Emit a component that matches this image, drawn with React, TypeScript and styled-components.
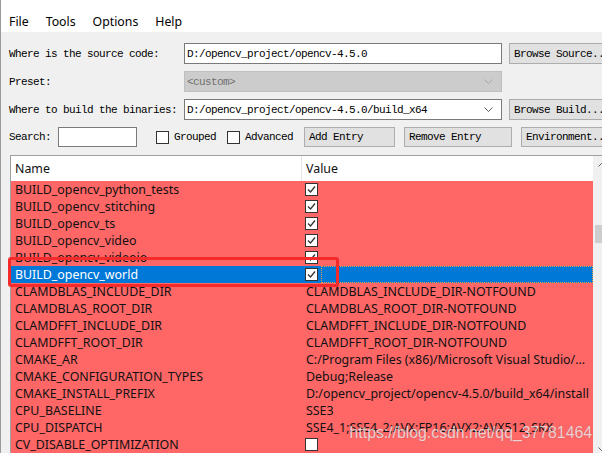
import styled, { createGlobalStyle } from "styled-components";

const mono = `"Liberation Mono", "Courier New", monospace`;
const sans = `"Noto Sans", "Open Sans", sans-serif`;

const GlobalStyle = createGlobalStyle`
  * { box-sizing: border-box; }
  html, body { margin: 0; padding: 0; background: #f0f0f0; }
  body { width: 602px; height: 453px; overflow: hidden; }
`;

const Window = styled.div`
  position: relative;
  width: 602px;
  height: 453px;
  overflow: hidden;
  background: #f0f0f0;
  border-left: 1px solid #9a9a9a;
  display: flex;
  flex-direction: column;
`;

const MenuBar = styled.div`
  height: 32px;
  flex: none;
  background: #fff;
  display: flex;
  align-items: flex-start;
  gap: 17px;
  padding: 12px 0 0 8px;
  font-family: ${sans};
  font-size: 12.3px;
  line-height: 20px;
  color: #000;
`;

const MenuItem = styled.span`
  white-space: nowrap;
`;

const Form = styled.div`
  display: grid;
  grid-template-columns: 168px 318px 100px;
  grid-auto-rows: 21px;
  gap: 7px;
  padding: 11px 0 0 8px;
  font-family: ${mono};
  font-size: 11px;
  letter-spacing: -0.6px;
  color: #000;
`;

const Label = styled.div`
  display: flex;
  align-items: center;
  white-space: nowrap;
`;

const Field = styled.div<{ $disabled?: boolean }>`
  display: flex;
  align-items: center;
  justify-content: space-between;
  padding: 0 8px 0 2px;
  border: 1px solid ${(p) => (p.$disabled ? "#bfbfbf" : "#7a7a7a")};
  background: ${(p) => (p.$disabled ? "#cccccc" : "#ffffff")};
  color: ${(p) => (p.$disabled ? "#707070" : "#000")};
  white-space: nowrap;
  overflow: hidden;
`;

const Chevron = styled.svg<{ $light?: boolean }>`
  width: 9px;
  height: 5px;
  flex: none;
  stroke: ${(p) => (p.$light ? "#a8a8a8" : "#606060")};
  fill: none;
`;

const Button = styled.div<{ $w?: number }>`
  display: flex;
  align-items: center;
  width: ${(p) => (p.$w ? `${p.$w}px` : "100%")};
  flex: none;
  padding: 0 4px;
  border: 1px solid #adadad;
  background: #e1e1e1;
  white-space: nowrap;
  overflow: hidden;
`;

const SearchRow = styled.div`
  grid-column: 1 / -1;
  display: flex;
  align-items: center;
  height: 20px;
`;

const SearchLabel = styled.div`
  width: 49px;
  flex: none;
  white-space: nowrap;
`;

const SearchInput = styled.div`
  width: 79px;
  height: 20px;
  flex: none;
  border: 1px solid #7a7a7a;
  background: #fff;
`;

const CheckItem = styled.div<{ $w: number; $ml?: number }>`
  display: flex;
  align-items: center;
  gap: 5px;
  width: ${(p) => p.$w}px;
  margin-left: ${(p) => p.$ml ?? 0}px;
  flex: none;
  white-space: nowrap;
`;

const Box = styled.div`
  width: 13px;
  height: 13px;
  flex: none;
  border: 1px solid #333;
  background: #fff;
  display: flex;
  align-items: center;
  justify-content: center;
`;

const ButtonGroup = styled.div`
  display: flex;
  gap: 9px;
  height: 20px;
`;

const TableFrame = styled.div`
  display: flex;
  flex: none;
  width: 610px;
  height: 302px;
  margin: 7px 0 0 9px;
  border-top: 1px solid #a0a0a0;
  border-left: 1px solid #a0a0a0;
  font-family: ${sans};
  font-size: 12.4px;
  color: #111;
`;

const ListArea = styled.div`
  width: 582px;
  flex: none;
  display: flex;
  flex-direction: column;
  background: #fff;
`;

const Header = styled.div`
  display: grid;
  grid-template-columns: 291px 1fr;
  height: 25px;
  flex: none;
  background: #fff;
`;

const HeaderCell = styled.div<{ $divider?: boolean }>`
  display: flex;
  align-items: center;
  padding-left: 4px;
  border-right: ${(p) => (p.$divider ? "1px solid #e5e5e5" : "none")};
`;

const Row = styled.div<{ $selected?: boolean }>`
  display: grid;
  grid-template-columns: 291px 1fr;
  height: 17px;
  flex: none;
  background: ${(p) => (p.$selected ? "#0078d7" : "#ff6666")};
  color: ${(p) => (p.$selected ? "#fff" : "#111")};
  line-height: 17px;
`;

const NameCell = styled.div`
  padding-left: 4px;
  white-space: nowrap;
  overflow: hidden;
`;

const ValueCell = styled.div<{ $check?: boolean }>`
  display: flex;
  align-items: center;
  gap: 3px;
  padding-left: ${(p) => (p.$check ? 3 : 4)}px;
  white-space: nowrap;
  overflow: hidden;
`;

const FocusRect = styled.div`
  flex: 1;
  align-self: stretch;
  border: 1px dotted #f0a040;
`;

const Scrollbar = styled.div`
  width: 17px;
  flex: none;
  display: flex;
  flex-direction: column;
  background: #f0f0f0;
`;

const ArrowButton = styled.div`
  height: 17px;
  flex: none;
  display: flex;
  align-items: center;
  justify-content: center;
`;

const Track = styled.div`
  flex: 1;
  padding: 52px 2px 0;
`;

const Thumb = styled.div`
  height: 18px;
  background: #cdcdcd;
`;

const Watermark = styled.div`
  position: absolute;
  right: 10px;
  top: 425px;
  font-family: "Liberation Sans", Arial, sans-serif;
  font-size: 15.8px;
  line-height: 16px;
  color: rgba(255, 255, 255, 0.72);
  text-shadow: 0 0 1px rgba(70, 70, 70, 0.4);
  white-space: nowrap;
  pointer-events: none;
`;

const Highlight = styled.div`
  position: absolute;
  left: 7px;
  top: 257px;
  width: 331px;
  height: 30px;
  border: 3px solid #f52b2b;
  border-radius: 3px;
  pointer-events: none;
`;

const Check = () => (
  <svg width="11" height="11" viewBox="0 0 11 11">
    <polyline points="2,5.5 4.5,8 9,2.5" fill="none" stroke="#333" strokeWidth="1.3" />
  </svg>
);

const CheckBox = ({ checked }: { checked?: boolean }) => <Box>{checked && <Check />}</Box>;

type Entry = { name: string; value?: string; check?: boolean; selected?: boolean };

const entries: Entry[] = [
  { name: "BUILD_opencv_python_tests", check: true },
  { name: "BUILD_opencv_stitching", check: true },
  { name: "BUILD_opencv_ts", check: true },
  { name: "BUILD_opencv_video", check: true },
  { name: "BUILD_opencv_videoio", check: true },
  { name: "BUILD_opencv_world", check: true, selected: true },
  { name: "CLAMDBLAS_INCLUDE_DIR", value: "CLAMDBLAS_INCLUDE_DIR-NOTFOUND" },
  { name: "CLAMDBLAS_ROOT_DIR", value: "CLAMDBLAS_ROOT_DIR-NOTFOUND" },
  { name: "CLAMDFFT_INCLUDE_DIR", value: "CLAMDFFT_INCLUDE_DIR-NOTFOUND" },
  { name: "CLAMDFFT_ROOT_DIR", value: "CLAMDFFT_ROOT_DIR-NOTFOUND" },
  { name: "CMAKE_AR", value: "C:/Program Files (x86)/Microsoft Visual Studio/..." },
  { name: "CMAKE_CONFIGURATION_TYPES", value: "Debug;Release" },
  { name: "CMAKE_INSTALL_PREFIX", value: "D:/opencv_project/opencv-4.5.0/build_x64/install" },
  { name: "CPU_BASELINE", value: "SSE3" },
  { name: "CPU_DISPATCH", value: "SSE4_1;SSE4_2;AVX;FP16;AVX2;AVX512_SKX" },
  { name: "CV_DISABLE_OPTIMIZATION", check: false },
];

const DownChevron = ({ light }: { light?: boolean }) => (
  <Chevron $light={light} viewBox="0 0 9 5">
    <polyline points="0.5,0.5 4.5,4.5 8.5,0.5" />
  </Chevron>
);

export default function App() {
  return (
    <Window>
      <GlobalStyle />
      <MenuBar>
        <MenuItem>File</MenuItem>
        <MenuItem>Tools</MenuItem>
        <MenuItem>Options</MenuItem>
        <MenuItem>Help</MenuItem>
      </MenuBar>

      <Form>
        <Label>Where is the source code:</Label>
        <Field>D:/opencv_project/opencv-4.5.0</Field>
        <Button>Browse Source...</Button>

        <Label>Preset:</Label>
        <Field $disabled>
          &lt;custom&gt;
          <DownChevron light />
        </Field>
        <div />

        <Label>Where to build the binaries:</Label>
        <Field>
          D:/opencv_project/opencv-4.5.0/build_x64
          <DownChevron />
        </Field>
        <Button>Browse Build...</Button>

        <SearchRow>
          <SearchLabel>Search:</SearchLabel>
          <SearchInput />
          <CheckItem $w={71} $ml={19}>
            <CheckBox />
            Grouped
          </CheckItem>
          <CheckItem $w={77}>
            <CheckBox />
            Advanced
          </CheckItem>
          <ButtonGroup>
            <Button $w={91}>Add Entry</Button>
            <Button $w={108}>Remove Entry</Button>
            <Button $w={100}>Environment...</Button>
          </ButtonGroup>
        </SearchRow>
      </Form>

      <TableFrame>
        <ListArea>
          <Header>
            <HeaderCell $divider>Name</HeaderCell>
            <HeaderCell>Value</HeaderCell>
          </Header>
          {entries.map((e) => (
            <Row key={e.name} $selected={e.selected}>
              <NameCell>{e.name}</NameCell>
              {e.value !== undefined ? (
                <ValueCell>{e.value}</ValueCell>
              ) : (
                <ValueCell $check>
                  <CheckBox checked={e.check} />
                  {e.selected && <FocusRect />}
                </ValueCell>
              )}
            </Row>
          ))}
        </ListArea>
        <Scrollbar>
          <ArrowButton>
            <svg width="7" height="4" viewBox="0 0 7 4">
              <polyline points="0.5,3.5 3.5,0.5 6.5,3.5" fill="none" stroke="#606060" />
            </svg>
          </ArrowButton>
          <Track>
            <Thumb />
          </Track>
          <ArrowButton>
            <svg width="7" height="4" viewBox="0 0 7 4">
              <polyline points="0.5,0.5 3.5,3.5 6.5,0.5" fill="none" stroke="#606060" />
            </svg>
          </ArrowButton>
        </Scrollbar>
      </TableFrame>

      <Highlight />
      <Watermark>https://blog.csdn.net/qq_37781464</Watermark>
    </Window>
  );
}
